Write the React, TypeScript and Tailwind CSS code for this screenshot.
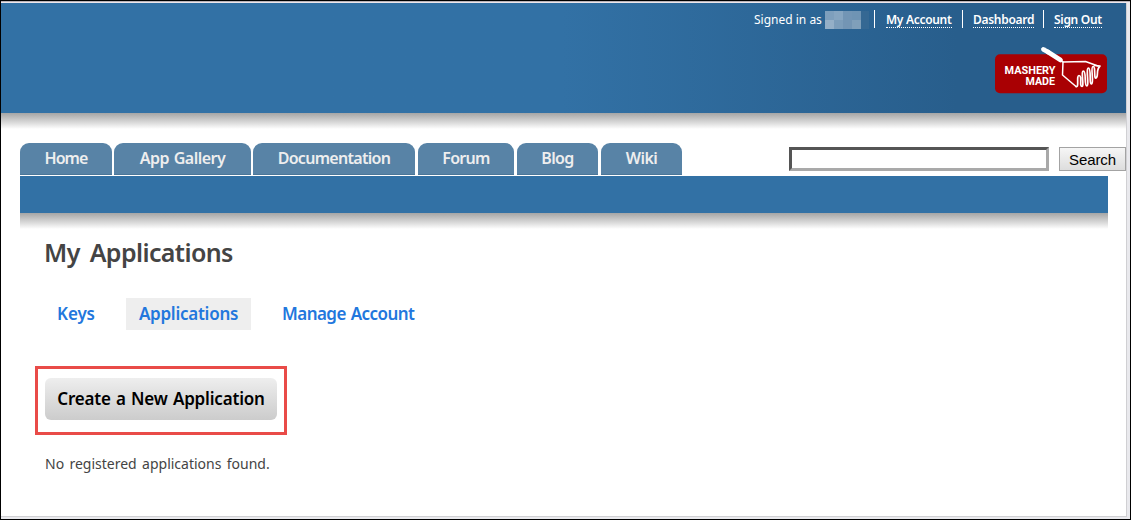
import React from "react";

const tabs = [
  { label: "Home", box: "w-[92px] mr-[2px]", text: "tracking-[-0.9px]" },
  { label: "App Gallery", box: "w-[137px] mr-[2px]", text: "tracking-[-0.5px] [word-spacing:1px]" },
  { label: "Documentation", box: "w-[162px] mr-[3px]", text: "tracking-[-0.7px]" },
  { label: "Forum", box: "w-[96px] mr-[3px]", text: "tracking-[-0.7px]" },
  { label: "Blog", box: "w-[81px] mr-[3px]", text: "tracking-[-0.6px]" },
  { label: "Wiki", box: "w-[81px]", text: "tracking-[-0.6px]" },
];

function MasheryBadge() {
  return (
    <svg width="116" height="50" viewBox="0 0 116 50" className="block">
      <rect x="3" y="8.3" width="112" height="39" rx="5" fill="#a90003" />
      <g fill="#fff" fontFamily="Roboto, sans-serif" fontWeight="700" fontSize="10.8">
        <text x="12.5" y="27.800" textLength="51" lengthAdjust="spacingAndGlyphs">MASHERY</text>
        <text x="33.5" y="39.400" textLength="29.5" lengthAdjust="spacingAndGlyphs">MADE</text>
      </g>
      <g fill="none" stroke="#fff" strokeLinecap="round" strokeLinejoin="round">
        <path d="M51.500 3.500 L56 6" strokeWidth="4.800" />
        <path d="M56 6 L68.500 14" strokeWidth="4.600" />
        <path d="M69 14 L71 16 L93.500 15.500 L106 20" strokeWidth="1.500" />
        <path d="M71 16 L70.500 29 L84 40.500" strokeWidth="1.500" />
        <path
          d="M84 40.500 C87.500 42 84 29.500 87 29.500 C90.500 29.500 87 40.500 90 40.500 C92.500 40.500 88.500 25 91.500 25 C94.500 25 92 40 94.800 40 C97.500 40 93.500 22 96.500 22 C99.500 22 97 38.500 99.500 38 C102.500 37 98 21 101 20.500 C104 20 101.500 33.500 104 32 C107 30 103.500 24 108 20 L102.500 19.500"
          strokeWidth="1.700"
        />
      </g>
    </svg>
  );
}

function Divider() {
  return <span className="-mt-[2px] h-[18px] w-px bg-white" />;
}

function Header() {
  return (
    <header className="flex h-[110px] w-[1125px] flex-col items-end bg-gradient-to-r from-[#3271a5] from-50% to-[#285e8c] to-85% font-['Noto_Sans',sans-serif] text-[12px] text-white">
      <div className="flex h-[34px] items-center pr-[24px]">
        <span className="w-[71px] whitespace-nowrap">Signed in as</span>
        <span className="flex h-[18px] w-[45px]">
          <span className="grid w-[36px] grid-cols-4 grid-rows-2">
            <i className="bg-[#7e9fbd]" /><i className="bg-[#86a5c1]" /><i className="bg-[#7295b5]" /><i className="bg-[#6f94b4]" />
            <i className="bg-[#94afc7]" /><i className="bg-[#7c9dba]" /><i className="bg-[#7395b4]" /><i className="bg-[#7f9fba]" />
          </span>
          <i className="w-[8px] bg-[#356893]" />
        </span>
        <span className="w-[4px]" />
        <Divider />
        <a className="ml-[11px] w-[66px] border-b border-dotted border-white text-[12px] leading-[15px] font-semibold tracking-[-0.3px] whitespace-nowrap">My Account</a>
        <span className="w-[10px]" />
        <Divider />
        <a className="ml-[10px] w-[61px] border-b border-dotted border-white text-[12px] leading-[15px] font-semibold tracking-[-0.3px] whitespace-nowrap">Dashboard</a>
        <span className="w-[9px]" />
        <Divider />
        <a className="ml-[10px] w-[48px] border-b border-dotted border-white text-[12px] leading-[15px] font-semibold tracking-[-0.3px] whitespace-nowrap">Sign Out</a>
      </div>
      <div className="mt-[9px] mr-[18px]">
        <MasheryBadge />
      </div>
    </header>
  );
}

export default function App() {
  return (
    <div className="h-[520px] w-[1131px] overflow-hidden border border-black bg-[#e9e9ed] font-['Noto_Sans',sans-serif]">
      <div className="h-px bg-[#b9b3b8]" />
      <div className="h-px bg-[#efe8ed]" />
      <div className="h-[514px] w-[1126px] border-r border-b border-[#d0d0d3] bg-white">
        <Header />
        <div className="h-[16px] bg-gradient-to-b from-[#a5a5a5] to-white" />
        <div className="mt-[14px] ml-[19px] flex h-[33px] items-start">
          <nav className="flex">
            {tabs.map((t) => (
              <a
                key={t.label}
                className={`flex h-[32px] items-center justify-center rounded-t-[9px] border-b border-[#4b7698] bg-[#5883a6] pb-px text-[16px] leading-[30px] font-semibold whitespace-nowrap text-[#eeeeee] ${t.box} ${t.text}`}
              >
                {t.label}
              </a>
            ))}
          </nav>
          <form className="mt-[4px] ml-[107px] flex">
            <input
              aria-label="Search"
              className="h-[24px] w-[260px] border-[3px] border-t-[#555555] border-r-[#a9a9a9] border-b-[#a9a9a9] border-l-[#555555] bg-white outline-none"
            />
            <button
              type="button"
              className="ml-[10px] h-[24px] w-[67px] border border-[#a3a3a3] bg-gradient-to-b from-[#f6f6f6] to-[#dddddd] pt-px font-['Liberation_Sans',sans-serif] text-[15px] leading-[22px] tracking-[-0.1px] text-black"
            >
              Search
            </button>
          </form>
        </div>
        <div className="ml-[19px] h-[37px] w-[1088px] bg-[#3271a5]" />
        <div className="ml-[19px] h-[16px] w-[1088px] bg-gradient-to-b from-[#a5a5a5] to-white" />
        <main className="flex flex-col items-start pl-[34px]">
          <h1 className="mt-[5px] ml-[9px] h-[37px] text-[25px] leading-[36px] font-semibold tracking-[-0.6px] whitespace-nowrap text-[#444444] [word-spacing:4px]">
            My Applications
          </h1>
          <nav className="mt-[27px] ml-[10px] flex h-[32px] text-[17px] leading-[32px] font-semibold whitespace-nowrap text-[#2277dd]">
            <a className="w-[81px] pl-[12px] tracking-[-0.1px]">Keys</a>
            <a className="w-[125px] bg-[#eeeeee] text-center tracking-[-0.25px]">Applications</a>
            <a className="pl-[31px] tracking-[-0.55px] [word-spacing:1px]">Manage Account</a>
          </nav>
          <div className="mt-[36px] h-[69px] w-[252px] border-[3px] border-[#e94b48] px-[7px] pt-[9px]">
            <button
              type="button"
              className="h-[42px] w-[232px] rounded-[6px] bg-gradient-to-b from-[#eeeeee] to-[#cccccc] text-[17px] font-semibold tracking-[-0.18px] whitespace-nowrap text-black [word-spacing:1px]"
            >
              Create a New Application
            </button>
          </div>
          <p className="mt-[18px] ml-[10px] text-[14px] leading-[22px] whitespace-nowrap text-[#444444] [word-spacing:1.7px]">
            No registered applications found.
          </p>
        </main>
      </div>
    </div>
  );
}
